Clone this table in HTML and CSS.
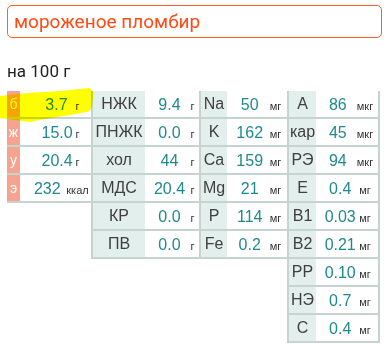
FILE: index.html
```html
<!DOCTYPE html>
<html lang="ru">
<head>
<meta charset="utf-8">
<title>мороженое пломбир</title>
<link rel="stylesheet" href="styles.css">
</head>
<body>
<div class="page">
  <div class="search">мороженое пломбир</div>
  <div class="per">на 100 г</div>

  <div class="facts">
    <svg class="marker" viewBox="0 0 96 36" width="96" height="36" aria-hidden="true">
      <path d="M0 8 L28 5 L60 3 L89 0 Q94 2 93 8 L92 19 Q90 24 86 24 L70 27 L45 31 L30 34 L22 33 L0 30 Z" fill="#ffff00"/>
    </svg>

    <div class="group g1">
      <div class="row"><span class="lbl">б</span><span class="val"><span class="num">3.7</span><span class="unit">г</span></span></div>
      <div class="row"><span class="lbl">ж</span><span class="val"><span class="num">15.0</span><span class="unit">г</span></span></div>
      <div class="row"><span class="lbl">у</span><span class="val"><span class="num">20.4</span><span class="unit">г</span></span></div>
      <div class="row"><span class="lbl">э</span><span class="val"><span class="num">232</span><span class="unit">ккал</span></span></div>
    </div>

    <div class="group g2">
      <div class="row"><span class="lbl">НЖК</span><span class="val"><span class="num">9.4</span><span class="unit">г</span></span></div>
      <div class="row"><span class="lbl">ПНЖК</span><span class="val"><span class="num">0.0</span><span class="unit">г</span></span></div>
      <div class="row"><span class="lbl">хол</span><span class="val"><span class="num">44</span><span class="unit">г</span></span></div>
      <div class="row"><span class="lbl">МДС</span><span class="val"><span class="num">20.4</span><span class="unit">г</span></span></div>
      <div class="row"><span class="lbl">КР</span><span class="val"><span class="num">0.0</span><span class="unit">г</span></span></div>
      <div class="row"><span class="lbl">ПВ</span><span class="val"><span class="num">0.0</span><span class="unit">г</span></span></div>
    </div>

    <div class="group g3">
      <div class="row"><span class="lbl">Na</span><span class="val"><span class="num">50</span><span class="unit">мг</span></span></div>
      <div class="row"><span class="lbl">K</span><span class="val"><span class="num">162</span><span class="unit">мг</span></span></div>
      <div class="row"><span class="lbl">Ca</span><span class="val"><span class="num">159</span><span class="unit">мг</span></span></div>
      <div class="row"><span class="lbl">Mg</span><span class="val"><span class="num">21</span><span class="unit">мг</span></span></div>
      <div class="row"><span class="lbl">P</span><span class="val"><span class="num">114</span><span class="unit">мг</span></span></div>
      <div class="row"><span class="lbl">Fe</span><span class="val"><span class="num">0.2</span><span class="unit">мг</span></span></div>
    </div>

    <div class="group g4">
      <div class="row"><span class="lbl">A</span><span class="val"><span class="num">86</span><span class="unit">мкг</span></span></div>
      <div class="row"><span class="lbl">кар</span><span class="val"><span class="num">45</span><span class="unit">мкг</span></span></div>
      <div class="row"><span class="lbl">РЭ</span><span class="val"><span class="num">94</span><span class="unit">мкг</span></span></div>
      <div class="row"><span class="lbl">E</span><span class="val"><span class="num">0.4</span><span class="unit">мг</span></span></div>
      <div class="row"><span class="lbl">B1</span><span class="val"><span class="num">0.03</span><span class="unit">мг</span></span></div>
      <div class="row"><span class="lbl">B2</span><span class="val"><span class="num">0.21</span><span class="unit">мг</span></span></div>
      <div class="row"><span class="lbl">PP</span><span class="val"><span class="num">0.10</span><span class="unit">мг</span></span></div>
      <div class="row"><span class="lbl">НЭ</span><span class="val"><span class="num">0.7</span><span class="unit">мг</span></span></div>
      <div class="row"><span class="lbl">C</span><span class="val"><span class="num">0.4</span><span class="unit">мг</span></span></div>
    </div>
  </div>
</div>
</body>
</html>
```

FILE: styles.css
```css
html, body {
  margin: 0;
  padding: 0;
  background: #fff;
}

.page {
  padding: 5px 4px 0 7px;
  font-family: Roboto, "Liberation Sans", sans-serif;
  color: #222;
}

.search {
  height: 31px;
  border: 1px solid #ff5f24;
  border-radius: 5px;
  padding: 0 6px;
  font-size: 19px;
  line-height: 31px;
  color: #ff4a14;
}

.per {
  margin-top: 23px;
  font-size: 17px;
  line-height: 20px;
  color: #222;
}

/* nutrient table: four independent columns of label/value rows */
.facts {
  position: relative;
  margin-top: 10px;
  display: flex;
  align-items: flex-start;
  font-family: "Liberation Sans", Arial, sans-serif;
}

.marker {
  position: absolute;
  left: -7px;
  top: -3px;
  mix-blend-mode: multiply;
  z-index: 2;
  pointer-events: none;
}

.group {
  display: flex;
  flex-direction: column;
}

.row {
  display: flex;
  height: 26px;
  border-bottom: 2px solid #c6d4d0;
}

.lbl {
  display: flex;
  align-items: center;
  justify-content: center;
  background: #e2efed;
  color: #404040;
  font-size: 16px;
}

.val {
  display: flex;
  align-items: baseline;
  justify-content: center;
  padding-top: 5px;
  box-sizing: border-box;
  background: #fff;
}

.num {
  text-align: center;
  font-size: 16px;
  color: #1f8a8c;
}

.unit {
  font-size: 11px;
  color: #333;
}

/* column 1: coloured single-letter labels */
.g1 .lbl {
  width: 13px;
  background: #f6a48f;
  color: #fff;
  font-size: 14px;
}
.g1 .val { width: 71px; padding-left: 10px; }
.g1 .num { width: 30px; }
.g1 .unit { margin-left: 4px; }

.g2 .row, .g3 .row, .g4 .row {
  border-left: 2px solid #c6d4d0;
}
.g2 .lbl { width: 52px; }
.g2 .val { width: 54px; padding-left: 4px; }
.g2 .num { width: 32px; }
.g2 .unit { margin-left: 5px; }

.g3 .lbl { width: 26px; }
.g3 .val { width: 60px; }
.g3 .num { width: 34px; }
.g3 .unit { margin-left: 3px; }

.g4 .row { border-right: 2px solid #c6d4d0; }
.g4 .lbl { width: 27px; }
.g4 .val { width: 62px; }
.g4 .num { width: 34px; }
.g4 .unit { margin-left: 2px; }
```
